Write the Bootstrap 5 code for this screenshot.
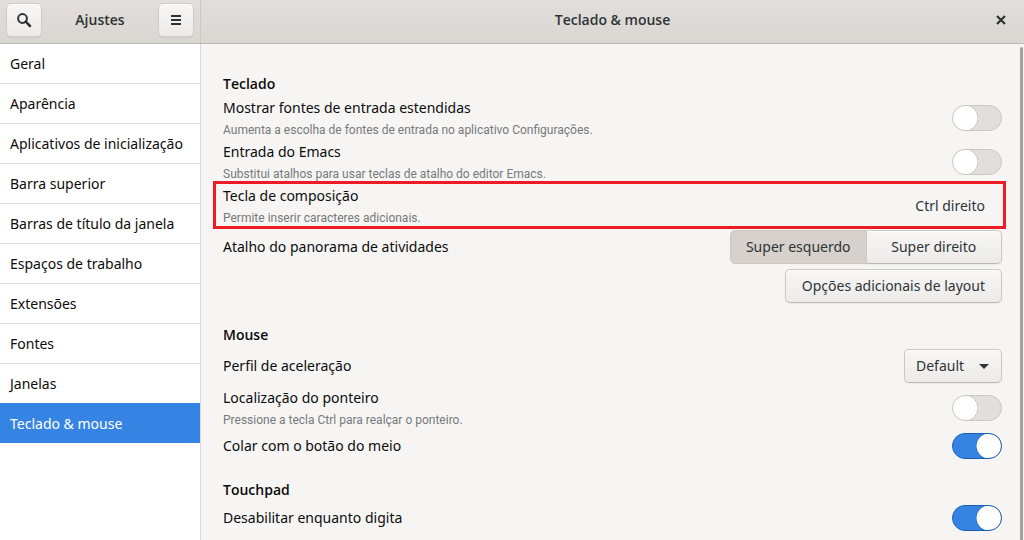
<!DOCTYPE html>
<html lang="pt-BR">
<head>
<meta charset="utf-8">
<meta name="viewport" content="width=device-width, initial-scale=1">
<title>Ajustes</title>
<link href="https://cdn.jsdelivr.net/npm/bootstrap@5.3.0/dist/css/bootstrap.min.css" rel="stylesheet">
<style>
body { font: 14px/24px "Noto Sans", "Open Sans", sans-serif; color: #0c0c0c; background: #f6f5f4; }
.side { width: 201px; border-right: 1px solid #d9d6d3; }
.titlebar { background: linear-gradient(#e1dedb, #dad6d2); border-bottom: 1px solid #bfb8b1; height: 44px; color: #2e3436; }
.titlebar .side { border-color: #cdc7c2; padding: 0 6px 3px; }
.titlebar h1, .titlebar h2, .prefs h3 { font-family: "Open Sans", "Noto Sans", sans-serif; font-size: 14px; line-height: 24px; font-weight: 600; margin: 0; }
.main-title { padding: 0 16px 3px 30px; }
.btn { --bs-btn-font-size: 14px; --bs-btn-line-height: 24px; --bs-btn-padding-y: 4px; --bs-btn-padding-x: 16px; --bs-btn-border-radius: 5px; --bs-btn-color: #2e3436; }
.btn-gtk { border: 1px solid #cdc7c2; border-bottom-color: #bfb8b1; background: linear-gradient(#f7f6f5, #edebe9); box-shadow: inset 0 1px #fff, 0 1px 2px #0000000d; }
.btn-bar { width: 36px; height: 34px; padding: 0; border-color: #d3cdc8; display: grid; place-items: center; }
.btn-flat { border: 0; padding: 5px 17px; }
.btn-check:checked + .btn-gtk { background: #d6d1cd; border-color: #cdc7c2; color: #2e3436; box-shadow: none; }
.btn-group { width: 272px; }
.btn-group .btn { flex: 1 1 0; padding-left: 0; padding-right: 0; }
.list-group { --bs-list-group-border-color: #e1dfdd; --bs-list-group-color: #0c0c0c; --bs-list-group-item-padding-x: 10px; --bs-list-group-item-padding-y: 0; --bs-list-group-active-bg: #3584e4; --bs-list-group-active-border-color: #3584e4; }
.list-group-item { height: 40px; line-height: 39px; white-space: nowrap; }
.prefs { padding: 28px 22px 8px; gap: 17px; }
.pref { min-height: 31px; }
.pref-tall { padding: 2px 0 3px; }
.hint { font-family: Roboto, "Noto Sans", sans-serif; font-size: 12px; line-height: 20px; color: #77797a; }
.form-switch { min-height: 0; }
.form-switch .form-check-input { width: 50px; height: 26px; margin: 0; border: 1px solid #cdc7c2; background: radial-gradient(circle at 13px 13px, #fff 12px, #bfb8b1 13px, transparent 13px) border-box #e1dedb; }
.form-switch .form-check-input:checked { border-color: #185fb4; background: radial-gradient(circle at 37px 13px, #fff 12px, #185fb4 13px, transparent 13px) border-box #3584e4; }
.marked::after { content: ""; position: absolute; inset: -3px -4px -1px -10px; border: 3px solid #ed1c24; pointer-events: none; }
.accel { width: 98px; height: 34px; appearance: none; border-radius: 5px; padding: 0 11px; font-size: 14px; line-height: 24px; color: #2e3436; }
.caret { right: 13px; top: 50%; margin-top: -2px; border: 5px solid transparent; border-top-color: #2e3436; border-bottom: 0; pointer-events: none; }
.scroller { right: 1px; top: 3px; bottom: 0; width: 3px; background: #a3a3a2; border-radius: 2px 2px 0 0; }
</style>
</head>
<body class="d-flex flex-column min-vh-100">
<header class="titlebar d-flex">
  <div class="side flex-shrink-0 d-flex align-items-center justify-content-between">
    <button class="btn btn-gtk btn-bar" type="button" aria-label="Pesquisar"><svg width="16" height="16" viewBox="0 0 16 16" fill="none" stroke="#2e3436" stroke-width="2"><circle cx="6.5" cy="6.5" r="4.4"/><path d="M9.7 9.7 14 14" stroke-width="2.5" stroke-linecap="round"/></svg></button>
    <h1>Ajustes</h1>
    <button class="btn btn-gtk btn-bar" type="button" aria-label="Menu"><svg width="16" height="16" fill="#2e3436"><path d="M3 3h10v2H3zM3 7h10v2H3zM3 11h10v2H3z"/></svg></button>
  </div>
  <div class="main-title flex-grow-1 d-flex align-items-center">
    <h2 class="flex-grow-1 text-center">Teclado &amp; mouse</h2>
    <button class="btn p-0 border-0 d-flex" type="button" aria-label="Fechar"><svg width="14" height="14" viewBox="0 0 14 14" stroke="#2e3436" stroke-width="2.2"><path d="m3 3 8 8M11 3l-8 8"/></svg></button>
  </div>
</header>
<div class="d-flex flex-grow-1">
  <nav class="side flex-shrink-0 bg-white">
    <div class="list-group list-group-flush border-bottom-0">
      <a href="#" class="list-group-item">Geral</a>
      <a href="#" class="list-group-item">Aparência</a>
      <a href="#" class="list-group-item">Aplicativos de inicialização</a>
      <a href="#" class="list-group-item">Barra superior</a>
      <a href="#" class="list-group-item">Barras de título da janela</a>
      <a href="#" class="list-group-item">Espaços de trabalho</a>
      <a href="#" class="list-group-item">Extensões</a>
      <a href="#" class="list-group-item">Fontes</a>
      <a href="#" class="list-group-item">Janelas</a>
      <a href="#" class="list-group-item active" aria-current="page">Teclado &amp; mouse</a>
    </div>
  </nav>
  <main class="prefs position-relative flex-grow-1 d-flex flex-column">
    <section>
      <h3>Teclado</h3>
      <div class="pref d-flex align-items-center justify-content-between">
        <label for="ext">Mostrar fontes de entrada estendidas<span class="hint d-block">Aumenta a escolha de fontes de entrada no aplicativo Configurações.</span></label>
        <div class="form-switch p-0 d-flex"><input class="form-check-input" type="checkbox" role="switch" id="ext"></div>
      </div>
      <div class="pref d-flex align-items-center justify-content-between">
        <label for="emacs">Entrada do Emacs<span class="hint d-block">Substitui atalhos para usar teclas de atalho do editor Emacs.</span></label>
        <div class="form-switch p-0 d-flex"><input class="form-check-input" type="checkbox" role="switch" id="emacs"></div>
      </div>
      <div class="pref marked position-relative d-flex align-items-center justify-content-between">
        <label for="compose">Tecla de composição<span class="hint d-block">Permite inserir caracteres adicionais.</span></label>
        <button class="btn btn-flat" type="button" id="compose">Ctrl direito</button>
      </div>
      <div class="pref pref-tall d-flex align-items-center justify-content-between">
        <span id="overview">Atalho do panorama de atividades</span>
        <div class="btn-group" role="group" aria-labelledby="overview">
          <input type="radio" class="btn-check" name="super" id="sl" checked><label class="btn btn-gtk" for="sl">Super esquerdo</label>
          <input type="radio" class="btn-check" name="super" id="sr"><label class="btn btn-gtk" for="sr">Super direito</label>
        </div>
      </div>
      <div class="pref pref-tall d-flex align-items-center justify-content-end">
        <button class="btn btn-gtk" type="button">Opções adicionais de layout</button>
      </div>
    </section>
    <section>
      <h3>Mouse</h3>
      <div class="pref pref-tall d-flex align-items-center justify-content-between">
        <label for="profile">Perfil de aceleração</label>
        <div class="position-relative d-flex"><select class="accel btn-gtk" id="profile"><option>Default</option></select><span class="caret position-absolute"></span></div>
      </div>
      <div class="pref d-flex align-items-center justify-content-between">
        <label for="locate">Localização do ponteiro<span class="hint d-block">Pressione a tecla Ctrl para realçar o ponteiro.</span></label>
        <div class="form-switch p-0 d-flex"><input class="form-check-input" type="checkbox" role="switch" id="locate"></div>
      </div>
      <div class="pref d-flex align-items-center justify-content-between">
        <label for="paste">Colar com o botão do meio</label>
        <div class="form-switch p-0 d-flex"><input class="form-check-input" type="checkbox" role="switch" id="paste" checked></div>
      </div>
    </section>
    <section>
      <h3>Touchpad</h3>
      <div class="pref d-flex align-items-center justify-content-between">
        <label for="typing">Desabilitar enquanto digita</label>
        <div class="form-switch p-0 d-flex"><input class="form-check-input" type="checkbox" role="switch" id="typing" checked></div>
      </div>
    </section>
    <div class="scroller position-absolute"></div>
  </main>
</div>
<script src="https://cdn.jsdelivr.net/npm/bootstrap@5.3.0/dist/js/bootstrap.bundle.min.js"></script>
</body>
</html>
